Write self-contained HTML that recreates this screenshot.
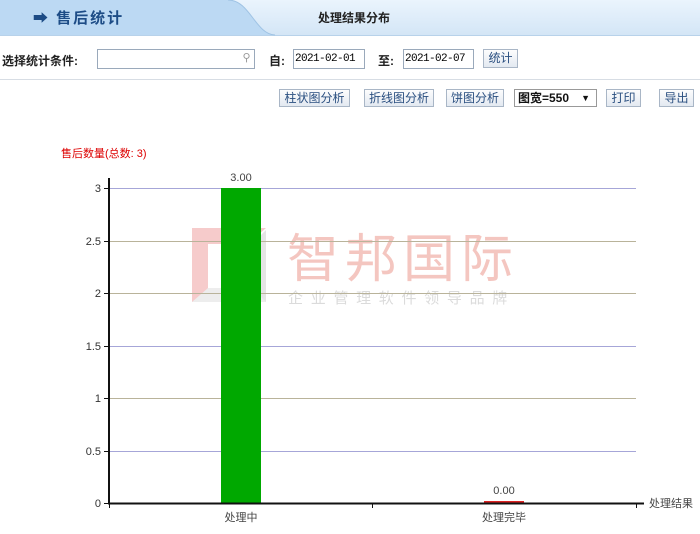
<!DOCTYPE html>
<html><head><meta charset="utf-8"><style>
body{margin:0;width:700px;height:534px;overflow:hidden;background:#fff;font-family:"Liberation Sans","Noto Sans CJK SC",sans-serif;position:relative}
.a{position:absolute}
.btn{position:absolute;top:89px;height:18px;border:1px solid #a9b6c6;background:linear-gradient(#fdfdfd,#e3e9f1);font-size:12px;color:#2a4f80;line-height:16px;text-align:center;box-sizing:border-box;white-space:nowrap}
.inp{position:absolute;top:49px;height:20px;border:1px solid #9aa9bb;background:#fff;box-sizing:border-box;font-family:"Liberation Mono",monospace;font-size:11px;letter-spacing:-0.6px;line-height:18px;padding-left:1px;white-space:nowrap;overflow:hidden}
.lbl{position:absolute;font-size:12px;font-weight:bold;color:#222}
</style></head><body>
<div class="a" style="left:0;top:0;width:700px;height:35px;background:linear-gradient(#eaf4fd,#d4e6f6);border-bottom:1px solid #b8d2ea"></div>
<svg class="a" style="left:0;top:0" width="290" height="36"><path d="M0 0H228C250 0 255 34 275 35H0Z" fill="#bcd9f3"/><path d="M228 0C250 0 255 34 275 35" stroke="#9fc3e4" fill="none"/></svg>
<div class="a" style="left:33px;top:7px;font-size:15px;font-weight:bold;color:#1d4c86;letter-spacing:2px">➡ 售后统计</div>
<div class="a" style="left:318px;top:9px;font-size:12px;font-weight:bold;color:#222">处理结果分布</div>
<div class="a" style="left:0;top:79px;width:700px;height:1px;background:#d7dde4"></div>
<div class="lbl" style="left:2px;top:52px">选择统计条件:</div>
<div class="inp" style="left:97px;width:158px"><span style="position:absolute;right:4px;top:0;color:#999;font-size:11px">⚲</span></div>
<div class="lbl" style="left:269px;top:52px">自:</div>
<div class="inp" style="left:293px;width:72px">2021-02-01</div>
<div class="lbl" style="left:378px;top:52px">至:</div>
<div class="inp" style="left:403px;width:71px">2021-02-07</div>
<div class="btn" style="left:483px;top:49px;width:35px;height:19px">统计</div>
<div class="btn" style="left:279px;width:71px">柱状图分析</div>
<div class="btn" style="left:364px;width:70px">折线图分析</div>
<div class="btn" style="left:446px;width:58px">饼图分析</div>
<div class="btn" style="left:514px;width:83px;background:#fff;color:#111;font-weight:bold;text-align:left;padding-left:3px;border-color:#999">图宽=550<span style="position:absolute;right:6px;font-size:9px">▼</span></div>
<div class="btn" style="left:606px;width:35px">打印</div>
<div class="btn" style="left:659px;width:35px">导出</div>
<div class="a" style="left:61px;top:145px;font-size:11px;color:#d00">售后数量(总数: 3)</div>
<svg class="a" style="left:0;top:0" width="700" height="534">
<g opacity="0.25"><path d="M192 228 L266 228 L248 244 L208 244 L208 302 L192 302Z" fill="#d33"/><path d="M252 244 L266 230 L266 302 L252 302Z" fill="#999"/><path d="M192 302 L208 288 L252 288 L266 302Z" fill="#bbb"/></g>
<text x="287" y="277" font-size="52" fill="#d43" opacity="0.3" font-family="Noto Sans CJK SC" letter-spacing="6">智邦国际</text>
<text x="288" y="303" font-size="15" fill="#999" opacity="0.35" font-family="Noto Sans CJK SC" letter-spacing="7.7">企业管理软件领导品牌</text>
<g stroke-width="1">
<line x1="110" x2="636" y1="188.5" y2="188.5" stroke="#a6a6d8"/>
<line x1="110" x2="636" y1="241.5" y2="241.5" stroke="#b9b39a"/>
<line x1="110" x2="636" y1="293.5" y2="293.5" stroke="#b9b39a"/>
<line x1="110" x2="636" y1="346.5" y2="346.5" stroke="#a6a6d8"/>
<line x1="110" x2="636" y1="398.5" y2="398.5" stroke="#b9b39a"/>
<line x1="110" x2="636" y1="451.5" y2="451.5" stroke="#a6a6d8"/>
</g>
<rect x="221" y="188" width="40" height="315" fill="#00a800"/>
<rect x="484" y="501" width="40" height="2" fill="#d22"/>
<line x1="109" y1="178" x2="109" y2="504" stroke="#111" stroke-width="2"/>
<line x1="108" y1="503.5" x2="644" y2="503.5" stroke="#111" stroke-width="2"/>
<g stroke="#111"><line x1="104" x2="109" y1="188.5" y2="188.5"/><line x1="104" x2="109" y1="241.5" y2="241.5"/><line x1="104" x2="109" y1="293.5" y2="293.5"/><line x1="104" x2="109" y1="346.5" y2="346.5"/><line x1="104" x2="109" y1="398.5" y2="398.5"/><line x1="104" x2="109" y1="451.5" y2="451.5"/><line x1="104" x2="109" y1="503.5" y2="503.5"/>
<line x1="372.5" x2="372.5" y1="503" y2="508"/><line x1="636.5" x2="636.5" y1="503" y2="508"/><line x1="109.5" x2="109.5" y1="503" y2="508"/></g>
<g font-size="11" fill="#333" text-anchor="end" font-family="Liberation Sans"><text x="101" y="192">3</text><text x="101" y="245">2.5</text><text x="101" y="297">2</text><text x="101" y="350">1.5</text><text x="101" y="402">1</text><text x="101" y="455">0.5</text><text x="101" y="507">0</text></g>
<g font-size="11" fill="#444" text-anchor="middle" font-family="Liberation Sans,Noto Sans CJK SC"><text x="241" y="181">3.00</text><text x="504" y="494">0.00</text><text x="241" y="521">处理中</text><text x="504" y="521">处理完毕</text></g>
<text x="649" y="507" font-size="11" fill="#444" font-family="Noto Sans CJK SC">处理结果</text>
</svg>
</body></html>
